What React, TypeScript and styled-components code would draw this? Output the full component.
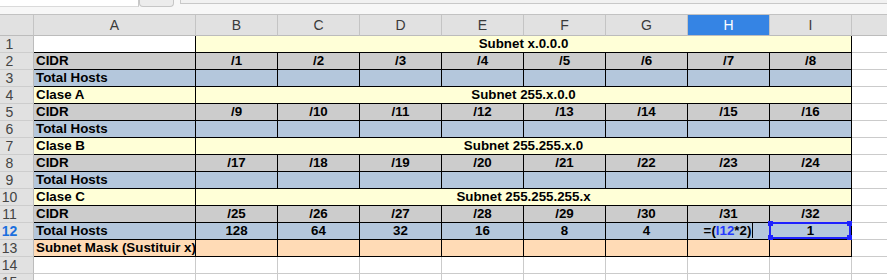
import React from 'react'
import styled, { createGlobalStyle } from 'styled-components'

const GlobalStyle = createGlobalStyle`
  *, *::before, *::after { box-sizing: border-box; }
  html, body { margin: 0; padding: 0; background: #fff; }
  body { font-family: 'Liberation Sans', Arial, sans-serif; overflow: hidden; }
`

const COLS = '34px 162px repeat(9, 82px)'
// J is only a sliver at the right edge, so its header stays blank
const COLUMN_NAMES = ['A', 'B', 'C', 'D', 'E', 'F', 'G', 'H', 'I', '']

const tones = {
  white: '#ffffff',
  yellow: '#ffffd7',
  gray: '#cccccc',
  blue: '#b4c7dc',
  orange: '#ffdbb6',
}
type Tone = keyof typeof tones

const SELECT_BLUE = '#1e22ff'

const Page = styled.div`
  width: 887px;
  height: 280px;
  overflow: hidden;
  background: #fff;
`

const Toolbar = styled.div`
  display: flex;
  align-items: flex-start;
  height: 14px;
  background: #f7f7f7;
`

const NameBox = styled.div`
  width: 139px;
  height: 7px;
  background: #fff;
  border-right: 1px solid #c9c9c9;
  border-bottom: 1px solid #dadada;
`

const ToolButton = styled.div`
  width: 35px;
  height: 7px;
  background: #ececec;
  border: 1px solid #c6c6c6;
  border-top: none;
  border-radius: 0 0 4px 4px;
`

const FormulaBox = styled.div`
  flex: 1;
  margin-left: 6px;
  height: 4px;
  background: #f1f1f1;
  border-left: 1px solid #cacaca;
  border-bottom: 1px solid #c8c8c8;
`

const HeaderRow = styled.div`
  display: grid;
  grid-template-columns: ${COLS};
  height: 22px;
  border-top: 1px solid #c2c2c2;
  background: #e1e1e1;
`

const ColHead = styled.div<{ $active?: boolean }>`
  height: 21px;
  border-right: 1px solid #c4c4c4;
  border-bottom: 1px solid #bcbcbc;
  background: ${({ $active }) => ($active ? '#3584e4' : '#e1e1e1')};
  color: ${({ $active }) => ($active ? '#ffffff' : '#3a3a3a')};
  font-size: 14px;
  line-height: 20px;
  text-align: center;
`

const SheetRow = styled.div`
  display: grid;
  grid-template-columns: ${COLS};
  height: 17px;
`

const RowHead = styled.div<{ $active?: boolean }>`
  height: 17px;
  padding-right: 14px;
  background: #e1e1e1;
  border-right: 1px solid #bcbcbc;
  border-bottom: 1px solid #cdcdcd;
  color: ${({ $active }) => ($active ? '#1b6fde' : '#444444')};
  font-weight: ${({ $active }) => ($active ? 700 : 400)};
  font-size: 14px;
  line-height: 16px;
  text-align: center;
`

const Cell = styled.div<{ $tone: Tone; $ruled?: boolean; $align?: 'left' | 'center'; $span?: number }>`
  position: relative;
  height: 17px;
  padding: 0 2px;
  grid-column: ${({ $span }) => ($span ? `span ${$span}` : 'auto')};
  background: ${({ $tone }) => tones[$tone]};
  border-right: 1px solid ${({ $ruled }) => ($ruled ? '#000' : '#cbcbcb')};
  border-bottom: 1px solid ${({ $ruled }) => ($ruled ? '#000' : '#cbcbcb')};
  color: #000;
  font-size: 13.33px;
  font-weight: 700;
  line-height: 16px;
  text-align: ${({ $align }) => $align || 'center'};
  white-space: nowrap;
`

const CellRef = styled.span`
  color: #2438ff;
`

const Caret = styled.span`
  display: inline-block;
  width: 1px;
  height: 15px;
  margin-left: 1px;
  vertical-align: -3px;
  background: #000;
`

const SelectionFrame = styled.div`
  position: absolute;
  left: -1px;
  top: -1px;
  right: 0;
  bottom: 0;
  border: 2px solid ${SELECT_BLUE};
  pointer-events: none;
`

const Handle = styled.span<{ $x: 'left' | 'right'; $y: 'top' | 'bottom' }>`
  position: absolute;
  width: 5px;
  height: 5px;
  background: ${SELECT_BLUE};
  ${({ $x }) => $x}: -3px;
  ${({ $y }) => $y}: -3px;
`

type SheetLine =
  | { n: number; kind: 'title'; label: string; title: string }
  | { n: number; kind: 'cidr'; from: number }
  | { n: number; kind: 'hosts'; values?: string[] }
  | { n: number; kind: 'mask' }
  | { n: number; kind: 'blank' }

const lines: SheetLine[] = [
  { n: 1, kind: 'title', label: '', title: 'Subnet x.0.0.0' },
  { n: 2, kind: 'cidr', from: 1 },
  { n: 3, kind: 'hosts' },
  { n: 4, kind: 'title', label: 'Clase A', title: 'Subnet 255.x.0.0' },
  { n: 5, kind: 'cidr', from: 9 },
  { n: 6, kind: 'hosts' },
  { n: 7, kind: 'title', label: 'Clase B', title: 'Subnet 255.255.x.0' },
  { n: 8, kind: 'cidr', from: 17 },
  { n: 9, kind: 'hosts' },
  { n: 10, kind: 'title', label: 'Clase C', title: 'Subnet 255.255.255.x' },
  { n: 11, kind: 'cidr', from: 25 },
  { n: 12, kind: 'hosts', values: ['128', '64', '32', '16', '8', '4', 'edit', '1'] },
  { n: 13, kind: 'mask' },
  { n: 14, kind: 'blank' },
  { n: 15, kind: 'blank' },
]

const EIGHT = [0, 1, 2, 3, 4, 5, 6, 7]

function HostCell({ value }: { value?: string }) {
  if (value === 'edit') {
    return (
      <Cell $tone="blue" $ruled>
        =(<CellRef>I12</CellRef>*2)
        <Caret />
      </Cell>
    )
  }
  if (value === '1') {
    return (
      <Cell $tone="blue" $ruled>
        {value}
        <SelectionFrame>
          <Handle $x="left" $y="top" />
          <Handle $x="right" $y="top" />
          <Handle $x="left" $y="bottom" />
          <Handle $x="right" $y="bottom" />
        </SelectionFrame>
      </Cell>
    )
  }
  return (
    <Cell $tone="blue" $ruled>
      {value}
    </Cell>
  )
}

function LineCells({ line }: { line: SheetLine }) {
  switch (line.kind) {
    case 'title':
      return (
        <>
          <Cell $tone={line.label ? 'yellow' : 'white'} $ruled $align="left">
            {line.label}
          </Cell>
          <Cell $tone="yellow" $ruled $span={8}>
            {line.title}
          </Cell>
        </>
      )
    case 'cidr':
      return (
        <>
          <Cell $tone="gray" $ruled $align="left">
            CIDR
          </Cell>
          {EIGHT.map(i => (
            <Cell key={i} $tone="gray" $ruled>
              /{line.from + i}
            </Cell>
          ))}
        </>
      )
    case 'hosts':
      return (
        <>
          <Cell $tone="blue" $ruled $align="left">
            Total Hosts
          </Cell>
          {EIGHT.map(i => (
            <HostCell key={i} value={line.values?.[i]} />
          ))}
        </>
      )
    case 'mask':
      return (
        <>
          <Cell $tone="orange" $ruled $align="left">
            Subnet Mask (Sustituir x)
          </Cell>
          {EIGHT.map(i => (
            <Cell key={i} $tone="orange" $ruled />
          ))}
        </>
      )
    default:
      return (
        <>
          <Cell $tone="white" />
          {EIGHT.map(i => (
            <Cell key={i} $tone="white" />
          ))}
        </>
      )
  }
}

export default function App() {
  return (
    <Page>
      <GlobalStyle />
      <Toolbar>
        <NameBox />
        <ToolButton />
        <FormulaBox />
      </Toolbar>
      <HeaderRow>
        <ColHead />
        {COLUMN_NAMES.map((name, i) => (
          <ColHead key={i} $active={name === 'H'}>
            {name}
          </ColHead>
        ))}
      </HeaderRow>
      {lines.map(line => (
        <SheetRow key={line.n}>
          <RowHead $active={line.n === 12}>{line.n}</RowHead>
          <LineCells line={line} />
          <Cell $tone="white" />
        </SheetRow>
      ))}
    </Page>
  )
}
